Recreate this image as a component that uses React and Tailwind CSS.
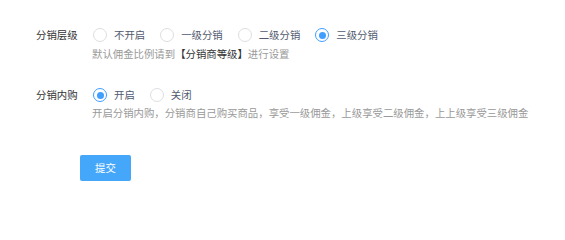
import { useState } from 'react';

function Radio({ checked, label, onClick }) {
  return (
    <label className="flex items-center mr-[15px] cursor-pointer" onClick={onClick}>
      <span
        className={
          'flex items-center justify-center w-[14px] h-[14px] rounded-full border bg-white ' +
          (checked ? 'border-[#409eff]' : 'border-[#dcdee2]')
        }
      >
        {checked && <span className="w-[7px] h-[7px] rounded-full bg-[#409eff]" />}
      </span>
      <span className="ml-[7px] text-[#515a6e]">{label}</span>
    </label>
  );
}

export default function App() {
  const [level, setLevel] = useState(3);
  const [inner, setInner] = useState(1);
  const levels = ['不开启', '一级分销', '二级分销', '三级分销'];

  return (
    <div
      className="w-[565px] h-[209px] bg-white pt-[25px] text-[10.4px] leading-[20px]"
      style={{ fontFamily: '"Noto Sans CJK SC", "Noto Sans", sans-serif' }}
    >
      <div className="flex pl-[36px]">
        <div className="w-[57px] text-[#333]">分销层级</div>
        <div className="flex flex-col">
          <div className="flex">
            {levels.map((l, i) => (
              <Radio key={l} label={l} checked={level === i} onClick={() => setLevel(i)} />
            ))}
          </div>
          <div className="mt-[2px] leading-[14px] text-[#999] -ml-[1px]">
            默认佣金比例请到<span className="text-[#333]">【分销商等级】</span>进行设置
          </div>
        </div>
      </div>

      <div className="flex pl-[36px] mt-[24px]">
        <div className="w-[57px] text-[#333]">分销内购</div>
        <div className="flex flex-col">
          <div className="flex">
            <Radio label="开启" checked={inner === 1} onClick={() => setInner(1)} />
            <Radio label="关闭" checked={inner === 0} onClick={() => setInner(0)} />
          </div>
          <div className="mt-[1px] leading-[14px] text-[#999] -ml-[1px]">
            开启分销内购，分销商自己购买商品，享受一级佣金，上级享受二级佣金，上上级享受三级佣金
          </div>
        </div>
      </div>

      <button className="ml-[80px] mt-[35px] w-[51px] h-[26px] rounded-[2px] bg-[#45a7fa] text-white text-[10.4px]">
        提交
      </button>
    </div>
  );
}
